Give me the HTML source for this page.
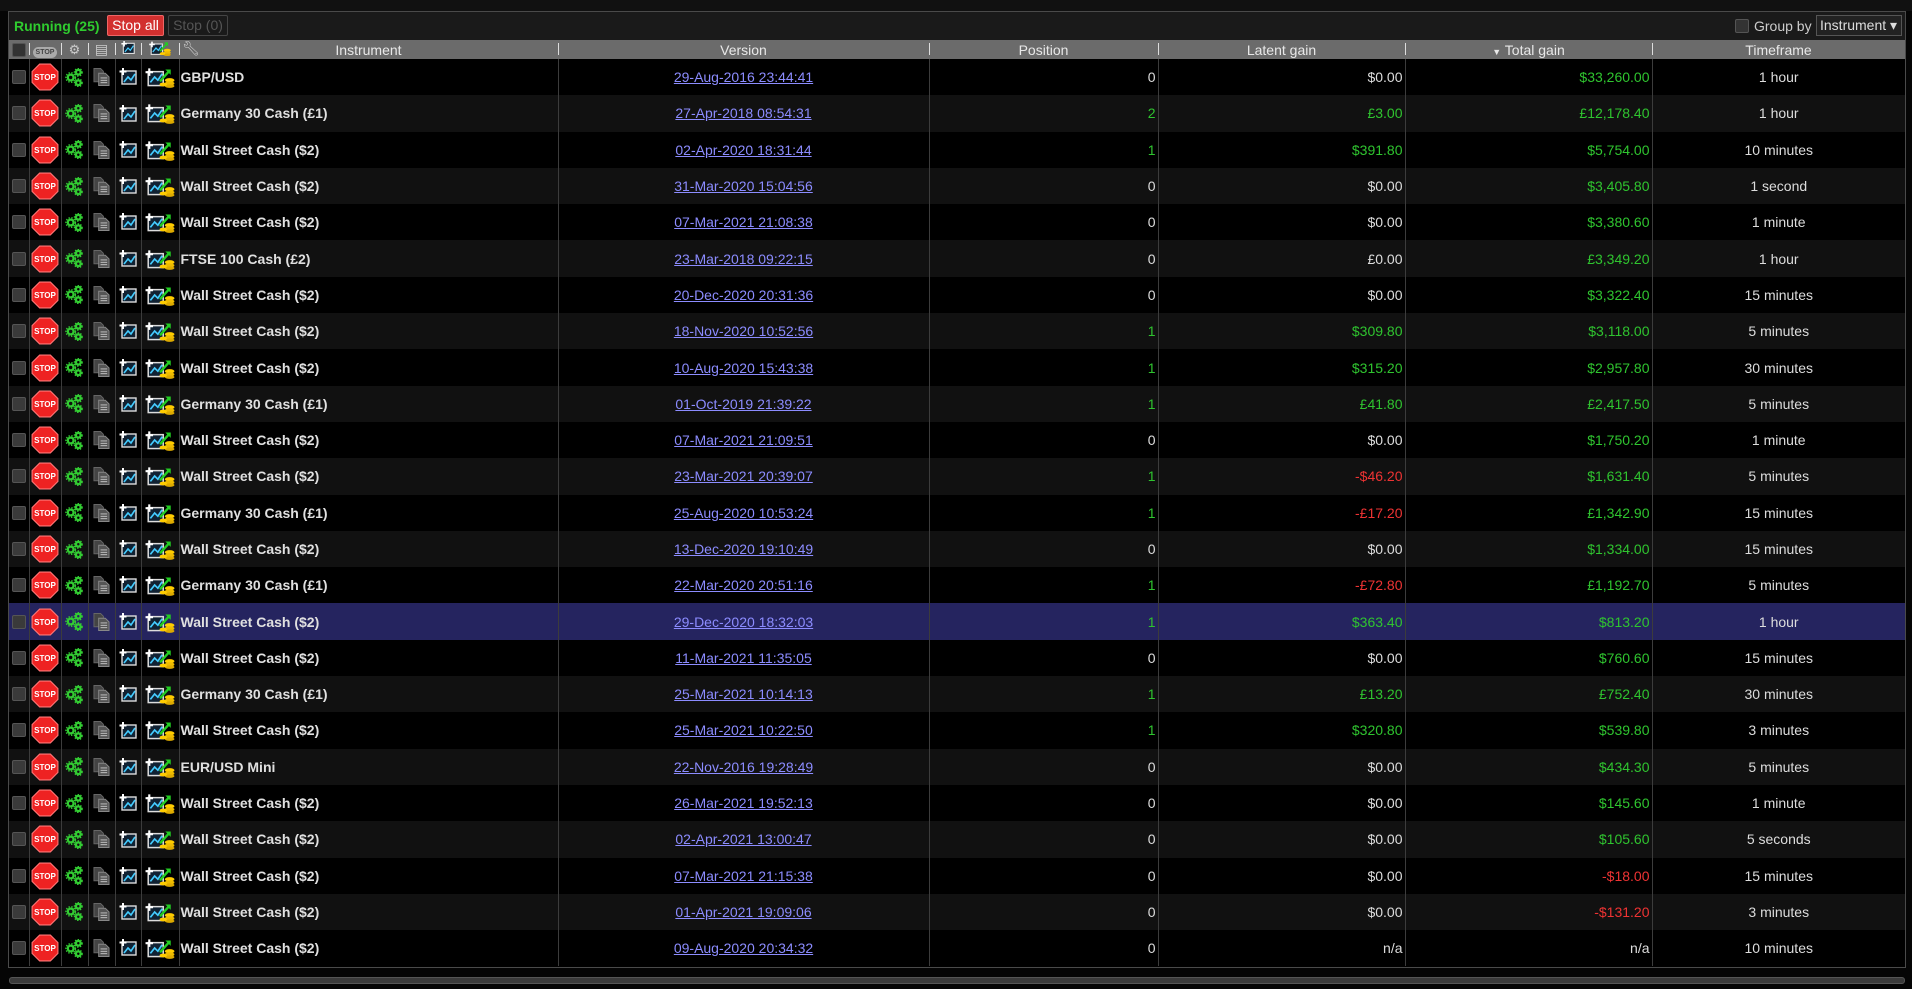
<!DOCTYPE html>
<html><head><meta charset="utf-8"><style>
*{box-sizing:border-box;margin:0;padding:0}
body{width:1912px;height:989px;background:#050505;font-family:"Liberation Sans",Arial,sans-serif;color:#ddd;overflow:hidden;position:relative}
#top{position:absolute;left:0;top:0;width:1912px;height:11px;background:#111}
#panel{position:absolute;left:8px;top:11px;width:1898px;height:957px;border:1px solid #4a4a4a;background:#000}
#bar{height:28px;background:#1a1a1a;position:relative}
.run{position:absolute;left:5px;top:6px;color:#2fcc2f;font-weight:bold;font-size:14px}
.b1{position:absolute;left:98px;top:3px;width:57px;height:21px;background:#d2302f;border:1px solid #e66;border-radius:2px;color:#fff;font-size:14px;text-align:center;line-height:19px}
.b2{position:absolute;left:159px;top:3px;width:60px;height:21px;border:1px solid #444;border-radius:2px;color:#555;font-size:14px;text-align:center;line-height:19px}
.gcb{position:absolute;left:1726px;top:7px;width:14px;height:14px;background:#333;border:1px solid #555;border-radius:2px}
.gb{position:absolute;left:1745px;top:6px;font-size:14px;color:#ccc}
.sel{position:absolute;left:1807px;top:3px;width:86px;height:21px;border:1px solid #555;background:#222;color:#ddd;font-size:14px;line-height:19px;padding-left:3px}
table{border-collapse:collapse;table-layout:fixed;width:1896px}
th{height:18px;background:#6b6b6b;color:#e8e8e8;font-weight:normal;font-size:14px;text-align:center;position:relative;padding:0}
th.s::before{content:"";position:absolute;left:0;top:3px;height:12px;border-left:1px solid #ddd}
td{height:36.3px;border-left:1px solid #3c3c3c;font-size:14px;padding:0;white-space:nowrap;overflow:hidden}
td:first-child{border-left:none}
tr.a td{background:#000}tr.b td{background:#111}tr.h td{background:#25245f}
.cb{display:block;width:14px;height:14px;margin:0 auto;background:#3a3a3a;border:1px solid #555;border-radius:2px}
.ic{text-align:center}
.ic svg{vertical-align:middle}
.ins{font-weight:bold;color:#e0e0e0;font-size:14px;padding-left:1px}
.v{text-align:center}.v a{color:#8c8cff;text-decoration:underline}
.r{text-align:right;padding-right:2px}
.c{text-align:center}
.g{color:#2fc42f}.rd{color:#ee3333}
#sb{position:absolute;left:9px;top:977px;width:1896px;height:7px;border:1px solid #555;border-radius:3px;background:#3a3a3a}
</style></head><body>
<svg width="0" height="0" style="position:absolute">
<defs>
<symbol id="stop" viewBox="0 0 26 26"><polygon points="8,1 18,1 25,8 25,18 18,25 8,25 1,18 1,8" fill="#e22" stroke="#f77" stroke-width="1"/><text x="13" y="16" font-size="7.5" font-weight="bold" fill="#fff" text-anchor="middle" font-family="Liberation Sans">STOP</text></symbol>
<symbol id="gear" viewBox="0 0 20 20"><g fill="none" stroke="#3c3" stroke-width="2.4"><circle cx="6" cy="10" r="3"/><circle cx="14" cy="4.5" r="2.5"/><circle cx="14" cy="15.5" r="2.5"/></g><g stroke="#3c3" stroke-width="1.5" stroke-dasharray="1.5 1.5"><circle cx="6" cy="10" r="5" fill="none"/><circle cx="14" cy="4.5" r="4" fill="none"/><circle cx="14" cy="15.5" r="4" fill="none"/></g></symbol>
<symbol id="doc" viewBox="0 0 18 20"><path d="M1 1h7l3 3v11H1z" fill="#444" stroke="#666"/><path d="M6 6h7l4 4v9H6z" fill="#555" stroke="#888"/><path d="M8 11h7M8 13.5h7M8 16h7" stroke="#ccc" stroke-width="1"/></symbol>
<symbol id="ch" viewBox="0 0 18 18"><rect x="3" y="3" width="14" height="13" fill="#123" stroke="#ddd" stroke-width="1.4"/><path d="M5 14l4-5 3 3 4-6" stroke="#4cf" stroke-width="1.6" fill="none"/><path d="M4 0v7M0.5 3.5h7" stroke="#fff" stroke-width="2"/></symbol>
<symbol id="ch2" viewBox="0 0 28 20"><rect x="3" y="5" width="14" height="13" fill="#123" stroke="#ddd" stroke-width="1.4"/><path d="M5 15l4-5 3 3 4-6" stroke="#4cf" stroke-width="1.6" fill="none"/><path d="M4 2v7M0.5 5.5h7" stroke="#fff" stroke-width="2"/><path d="M14 14l9-10" stroke="#2c2" stroke-width="2.2"/><path d="M19 3h5v5z" fill="#2c2"/><ellipse cx="23" cy="13" rx="4.5" ry="2" fill="#fc0"/><ellipse cx="23" cy="16" rx="4.5" ry="2" fill="#eb0"/><ellipse cx="23" cy="18.5" rx="4.5" ry="1.6" fill="#da0"/><ellipse cx="17" cy="17" rx="3.5" ry="1.8" fill="#fc0"/></symbol>
</defs></svg>
<div id="top"></div>
<div id="panel">
<div id="bar"><span class="run">Running (25)</span><span class="b1">Stop all</span><span class="b2">Stop (0)</span><span class="gcb"></span><span class="gb">Group by</span><span class="sel">Instrument ▾</span></div>
<table>
<colgroup><col style="width:20px"><col style="width:32px"><col style="width:27px"><col style="width:27px"><col style="width:26px"><col style="width:38px"><col style="width:379px"><col style="width:371px"><col style="width:229px"><col style="width:247px"><col style="width:247px"><col style="width:253px"></colgroup>
<tr><th><span class="cb" style="background:#333"></span></th><th class="s"><span style="display:inline-block;width:24px;height:11px;border-radius:6px;background:#aaa;color:#444;font-size:7px;font-weight:bold;line-height:11px">STOP</span></th><th class="s" style="color:#ccc;font-size:13px">⚙</th><th class="s" style="color:#ccc">▤</th><th class="s"><svg width="16" height="14"><use href="#ch"/></svg></th><th class="s"><svg width="26" height="16"><use href="#ch2"/></svg></th><th class="s"><span style="position:absolute;left:3px;top:0;color:#ccc">🔧︎</span>Instrument</th><th class="s">Version</th><th class="s">Position</th><th class="s">Latent gain</th><th class="s"><span style="font-size:9px">▼</span> Total gain</th><th class="s">Timeframe</th></tr>
<tbody id="tb"></tbody>
</table>
</div>
<div id="sb"></div>
<script>
var d=[
["GBP/USD","29-Aug-2016 23:44:41","0","$0.00","$33,260.00","1 hour"],
["Germany 30 Cash (£1)","27-Apr-2018 08:54:31","2","£3.00","£12,178.40","1 hour"],
["Wall Street Cash ($2)","02-Apr-2020 18:31:44","1","$391.80","$5,754.00","10 minutes"],
["Wall Street Cash ($2)","31-Mar-2020 15:04:56","0","$0.00","$3,405.80","1 second"],
["Wall Street Cash ($2)","07-Mar-2021 21:08:38","0","$0.00","$3,380.60","1 minute"],
["FTSE 100 Cash (£2)","23-Mar-2018 09:22:15","0","£0.00","£3,349.20","1 hour"],
["Wall Street Cash ($2)","20-Dec-2020 20:31:36","0","$0.00","$3,322.40","15 minutes"],
["Wall Street Cash ($2)","18-Nov-2020 10:52:56","1","$309.80","$3,118.00","5 minutes"],
["Wall Street Cash ($2)","10-Aug-2020 15:43:38","1","$315.20","$2,957.80","30 minutes"],
["Germany 30 Cash (£1)","01-Oct-2019 21:39:22","1","£41.80","£2,417.50","5 minutes"],
["Wall Street Cash ($2)","07-Mar-2021 21:09:51","0","$0.00","$1,750.20","1 minute"],
["Wall Street Cash ($2)","23-Mar-2021 20:39:07","1","-$46.20","$1,631.40","5 minutes"],
["Germany 30 Cash (£1)","25-Aug-2020 10:53:24","1","-£17.20","£1,342.90","15 minutes"],
["Wall Street Cash ($2)","13-Dec-2020 19:10:49","0","$0.00","$1,334.00","15 minutes"],
["Germany 30 Cash (£1)","22-Mar-2020 20:51:16","1","-£72.80","£1,192.70","5 minutes"],
["Wall Street Cash ($2)","29-Dec-2020 18:32:03","1","$363.40","$813.20","1 hour"],
["Wall Street Cash ($2)","11-Mar-2021 11:35:05","0","$0.00","$760.60","15 minutes"],
["Germany 30 Cash (£1)","25-Mar-2021 10:14:13","1","£13.20","£752.40","30 minutes"],
["Wall Street Cash ($2)","25-Mar-2021 10:22:50","1","$320.80","$539.80","3 minutes"],
["EUR/USD Mini","22-Nov-2016 19:28:49","0","$0.00","$434.30","5 minutes"],
["Wall Street Cash ($2)","26-Mar-2021 19:52:13","0","$0.00","$145.60","1 minute"],
["Wall Street Cash ($2)","02-Apr-2021 13:00:47","0","$0.00","$105.60","5 seconds"],
["Wall Street Cash ($2)","07-Mar-2021 21:15:38","0","$0.00","-$18.00","15 minutes"],
["Wall Street Cash ($2)","01-Apr-2021 19:09:06","0","$0.00","-$131.20","3 minutes"],
["Wall Street Cash ($2)","09-Aug-2020 20:34:32","0","n/a","n/a","10 minutes"]];
function cl(v){if(v=="n/a")return"";if(v[0]=="-")return"rd";if(/^[^\d]*0\.00$/.test(v)||v=="0")return"";return"g";}
var h="";d.forEach(function(r,i){var c=i==15?"h":(i%2?"b":"a");
h+='<tr class="'+c+'"><td><span class="cb"></span></td><td class="ic"><svg width="28" height="28"><use href="#stop"/></svg></td><td class="ic"><svg width="19" height="19"><use href="#gear"/></svg></td><td class="ic"><svg width="17" height="20"><use href="#doc"/></svg></td><td class="ic"><svg width="18" height="18"><use href="#ch"/></svg></td><td class="ic"><svg width="30" height="22"><use href="#ch2"/></svg></td><td class="ins">'+r[0]+'</td><td class="v"><a>'+r[1]+'</a></td><td class="r '+cl(r[2])+'">'+r[2]+'</td><td class="r '+cl(r[3])+'">'+r[3]+'</td><td class="r '+cl(r[4])+'">'+r[4]+'</td><td class="c">'+r[5]+'</td></tr>';});
document.getElementById("tb").innerHTML=h;
</script>
</body></html>
